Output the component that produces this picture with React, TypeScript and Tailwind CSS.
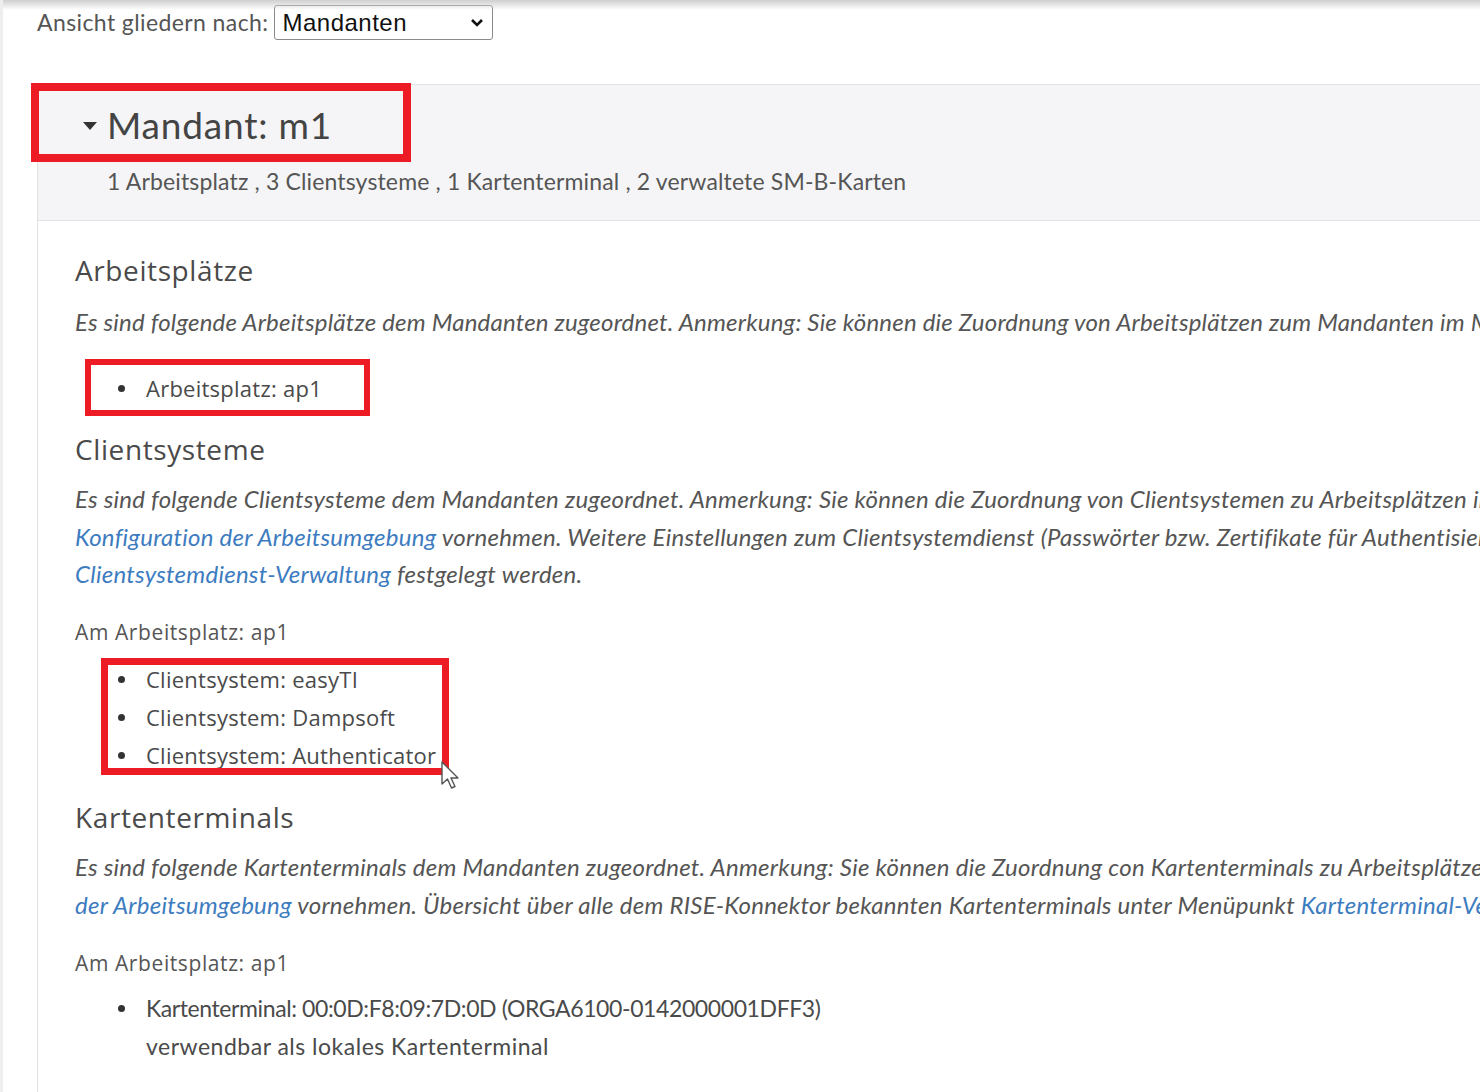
import React from "react";

const lato = { fontFamily: "Lato, 'Open Sans', sans-serif" };
const open = { fontFamily: "'Open Sans', Lato, sans-serif" };

function Link({ children }: { children: React.ReactNode }) {
  return <span className="text-[#3d7cc0]">{children}</span>;
}

function Bullet({ children, className = "" }: { children: React.ReactNode; className?: string }) {
  return (
    <div className="flex h-[38px] items-center whitespace-nowrap">
      <div className="w-[71px] shrink-0 flex items-center">
        <span className="ml-[43px] block h-[7px] w-[7px] rounded-full bg-[#333]" />
      </div>
      <span className={className}>{children}</span>
    </div>
  );
}

function Cursor() {
  return (
    <svg width="24" height="32" viewBox="0 0 24 32" className="absolute left-[364px] top-[99px]">
      <path
        d="M3 2 L3 24 L8.5 19 L12.5 28 L16 26.5 L12 18 L19 18 Z"
        fill="#fff"
        stroke="#555"
        strokeWidth="1.4"
        strokeLinejoin="round"
      />
    </svg>
  );
}

function Heading({ children, className = "" }: { children: React.ReactNode; className?: string }) {
  return (
    <div className={`h-[40px] leading-[40px] text-[28px] text-[#4a4a4a] tracking-[0.6px] ${className}`} style={open}>
      {children}
    </div>
  );
}

export default function App() {
  return (
    <div
      className="relative flex flex-col w-[1480px] h-[1092px] overflow-hidden bg-white text-[#4a4a4a] border-l-[3px] border-[#eeeeee]"
      style={lato}
    >
      <div className="absolute left-0 right-0 top-0 h-[10px] bg-gradient-to-b from-[#cfcfcf] to-transparent" />

      {/* toolbar */}
      <div className="flex shrink-0 items-center h-[44px] pl-[34px] pt-[1px]">
        <span className="whitespace-nowrap text-[#555] text-[23px] tracking-[0.4px]">Ansicht gliedern nach:</span>
        <div
          className="ml-[6px] flex h-[35px] w-[219px] items-center justify-between rounded-[3px] border border-[#8a8a8a] bg-white pl-[7px] pr-[8px] text-[24px] text-[#111] tracking-[0.5px]"
          style={{ fontFamily: "'Liberation Sans', Arial, sans-serif" }}
        >
          <span>Mandanten</span>
          <svg width="14" height="10" viewBox="0 0 14 10">
            <path d="M2 2 L7 7 L12 2" fill="none" stroke="#111" strokeWidth="2.6" />
          </svg>
        </div>
      </div>

      {/* panel */}
      <div className="flex-1 flex flex-col ml-[34px] mt-[40px] border-l border-t border-[#e2e2e4]">
        <div className="shrink-0 bg-[#f5f5f7] border-b border-[#e2e2e4] h-[136px]">
          <div className="relative h-[79px] flex items-center pl-[45px]">
            <div className="absolute left-[-7px] top-[-2px] w-[380px] h-[79px] border-[8px] border-[#ed1c24]" />
            <svg width="14" height="8" viewBox="0 0 14 8" className="mt-[2px]">
              <path d="M0 0 L14 0 L7 8 Z" fill="#333" />
            </svg>
            <span className="ml-[10px] text-[37px] text-[#444] tracking-[0.8px]">Mandant: m1</span>
          </div>
          <div className="pl-[69px] h-[34px] leading-[34px] text-[23px] whitespace-nowrap text-[#555] tracking-[0.15px]">
            1 Arbeitsplatz , 3 Clientsysteme , 1 Kartenterminal , 2 verwaltete SM-B-Karten
          </div>
        </div>

        <div className="flex-1 pl-[37px] pt-[29px] text-[23px]">
          {/* Arbeitsplätze */}
          <Heading>Arbeitsplätze</Heading>
          <div className="mt-[13px] h-[38px] leading-[38px] italic whitespace-nowrap text-[#555] text-[24px] tracking-[0.2px]">
            Es sind folgende Arbeitsplätze dem Mandanten zugeordnet. Anmerkung: Sie können die Zuordnung von Arbeitsplätzen zum Mandanten im Menüpunkt Konfiguration der Arbeitsumgebung vornehmen.
          </div>
          <div className="relative mt-[28px]">
            <div className="absolute left-[10px] top-[-10px] w-[285px] h-[57px] border-[6px] border-[#ed1c24]" />
            <Bullet className="text-[22px] tracking-[0.25px]">
              <span style={open}>Arbeitsplatz: ap1</span>
            </Bullet>
          </div>

          {/* Clientsysteme */}
          <Heading className="mt-[22px]">Clientsysteme</Heading>
          <div className="mt-[11px] italic whitespace-nowrap text-[#555] leading-[37.5px] text-[24px] tracking-[0.25px]">
            <div>
              Es sind folgende Clientsysteme dem Mandanten zugeordnet. Anmerkung: Sie können die Zuordnung von Clientsystemen zu Arbeitsplätzen im Menüpunkt
            </div>
            <div>
              <Link>Konfiguration der Arbeitsumgebung</Link> vornehmen. Weitere Einstellungen zum Clientsystemdienst (Passwörter bzw. Zertifikate für Authentisierung) können unter Menüpunkt
            </div>
            <div>
              <Link>Clientsystemdienst-Verwaltung</Link> festgelegt werden.
            </div>
          </div>
          <div className="mt-[20px] h-[38px] leading-[38px] text-[21px] text-[#555] tracking-[0.6px]" style={open}>
            Am Arbeitsplatz: ap1
          </div>
          <div className="relative mt-[10px]" style={open}>
            <div className="absolute left-[26px] top-[-3px] w-[348px] h-[117px] border-[7px] border-[#ed1c24]" />
            <Bullet className="text-[22px] tracking-[0.25px]">Clientsystem: easyTI</Bullet>
            <Bullet className="text-[22px] tracking-[0.25px]">Clientsystem: Dampsoft</Bullet>
            <Bullet className="text-[22px] tracking-[0.25px]">Clientsystem: Authenticator</Bullet>
            <Cursor />
          </div>

          {/* Kartenterminals */}
          <Heading className="mt-[22px]">Kartenterminals</Heading>
          <div className="mt-[11px] italic whitespace-nowrap text-[#555] leading-[38px] text-[24px] tracking-[0.25px]">
            <div>
              Es sind folgende Kartenterminals dem Mandanten zugeordnet. Anmerkung: Sie können die Zuordnung con Kartenterminals zu Arbeitsplätzen im Menüpunkt <Link>Konfiguration</Link>
            </div>
            <div>
              <Link>der Arbeitsumgebung</Link> vornehmen. Übersicht über alle dem RISE-Konnektor bekannten Kartenterminals unter Menüpunkt <Link>Kartenterminal-Verwaltung</Link>
            </div>
          </div>
          <div className="mt-[20px] h-[38px] leading-[38px] text-[21px] text-[#555] tracking-[0.6px]" style={open}>
            Am Arbeitsplatz: ap1
          </div>
          <div className="mt-[8px]">
            <Bullet className="text-[23px] tracking-[-0.4px]">Kartenterminal: 00:0D:F8:09:7D:0D (ORGA6100-0142000001DFF3)</Bullet>
            <div className="pl-[71px] h-[37px] leading-[37px] whitespace-nowrap text-[23px] tracking-[0.5px]">
              verwendbar als lokales Kartenterminal
            </div>
          </div>
        </div>
      </div>
    </div>
  );
}
